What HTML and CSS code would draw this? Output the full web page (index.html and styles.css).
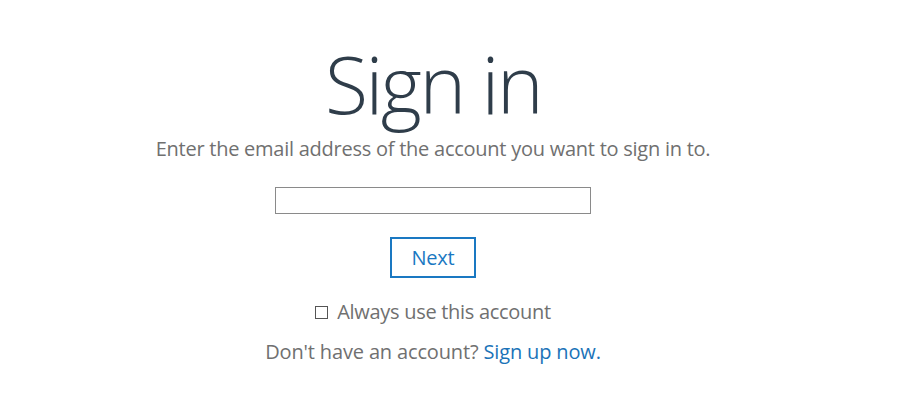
FILE: index.html
```html
<!DOCTYPE html>
<html>
<head>
<meta charset="utf-8">
<link rel="stylesheet" href="styles.css">
</head>
<body>
<main class="signin">
  <h1 class="title">Sign in</h1>
  <p class="subtitle">Enter the email address of the account you want to sign in to.</p>
  <input class="email" type="text">
  <button class="next">Next</button>
  <label class="remember"><span class="box"></span>Always use this account</label>
  <p class="signup">Don't have an account? <a href="#">Sign up now.</a></p>
</main>
</body>
</html>
```
FILE: styles.css
```css
html, body {
  margin: 0;
  padding: 0;
  background: #ffffff;
}
body {
  font-family: "Open Sans", "Noto Sans", sans-serif;
  color: #707070;
}
.signin {
  display: flex;
  flex-direction: column;
  align-items: center;
  padding-top: 34px;
  padding-right: 42px;
}
.title {
  margin: 0;
  font-size: 79px;
  font-weight: 300;
  line-height: 100px;
  color: #2f3d4a;
  letter-spacing: -2.5px;
}
.subtitle {
  margin: 2px 0 0;
  font-size: 20px;
  line-height: 26px;
  letter-spacing: -0.25px;
  color: #707070;
}
.email {
  margin-top: 25px;
  width: 316px;
  height: 27px;
  box-sizing: border-box;
  border: 1px solid #8a8a8a;
  padding: 0;
  outline: none;
}
.next {
  margin-top: 23px;
  width: 86px;
  height: 41px;
  box-sizing: border-box;
  border: 2px solid #1a78c2;
  background: #fff;
  color: #1a78c2;
  font-family: inherit;
  font-size: 20px;
  letter-spacing: -0.2px;
  padding: 0;
}
.remember {
  margin-top: 21px;
  display: flex;
  align-items: center;
  font-size: 20px;
  line-height: 26px;
  letter-spacing: -0.3px;
}
.box {
  width: 11px;
  height: 11px;
  border: 1px solid #555;
  margin-right: 9px;
}
.signup {
  margin: 14px 0 0;
  font-size: 20px;
  line-height: 26px;
  letter-spacing: -0.15px;
}
.signup a {
  color: #1a73b8;
  text-decoration: none;
}
```
